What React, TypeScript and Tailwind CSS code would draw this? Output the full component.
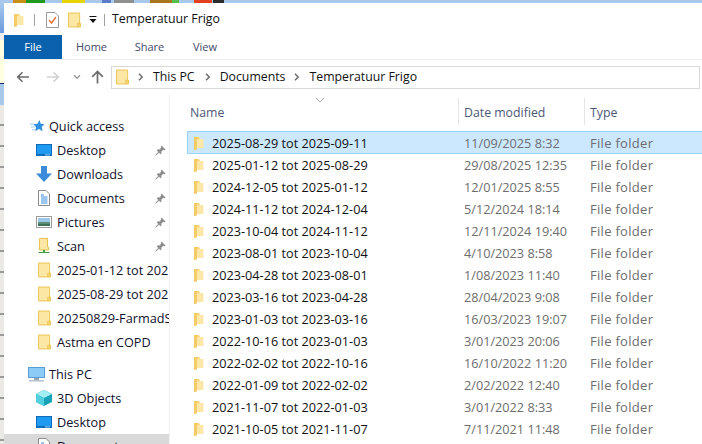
import React from "react";

const FONT = "font-['Open_Sans','Noto_Sans',sans-serif]";

function Folder({ w = 13, h = 16 }: { w?: number; h?: number }) {
  return (
    <svg width={w} height={h} viewBox="0 0 14 16" className="shrink-0">
      <path d="M0.5 0.5H12.5V11.5L10.5 15.5H0.5Z" fill="#FCE8A4" stroke="#EBC24F" />
      <path d="M10.5 15.5V11.5H13.5V15.5Z" fill="#F6D672" stroke="#EBC24F" />
    </svg>
  );
}

function SmallFolder() {
  return (
    <svg width="10" height="14" viewBox="0 0 10 14" className="shrink-0">
      <path d="M0 1H5L6 3H9V12H3L0 14Z" fill="#FBD46E" />
      <path d="M3 3H9.5V12H3Z" fill="#FDE7A8" />
      <path d="M0 1H3V13.5L0 14Z" fill="#F3CB68" />
    </svg>
  );
}

function Pin() {
  return (
    <svg width="11" height="11" viewBox="0 0 12 12" className="shrink-0">
      <path d="M7 0.5L11.5 5L10.3 5.6L9 5.2L6.9 7.4L7 9.4L6 10L2 6L2.7 5L4.7 5L6.8 3L6.4 1.7Z" fill="#8C8C8C" />
      <path d="M3.5 8L0.8 11.2L4 8.5Z" fill="#8C8C8C" stroke="#8C8C8C" strokeWidth="0.7" />
    </svg>
  );
}

function Desktop() {
  return (
    <svg width="16" height="12" viewBox="0 0 16 12" className="shrink-0">
      <rect x="0" y="0" width="16" height="12" fill="#0F6CBD" />
      <rect x="1" y="1" width="14" height="9" fill="#1E9BF0" />
      <rect x="9" y="10.5" width="5" height="0.8" fill="#BFE3FA" />
    </svg>
  );
}

const quick = [
  { label: "Desktop", icon: <Desktop />, pin: true },
  {
    label: "Downloads",
    pin: true,
    icon: (
      <svg width="16" height="16" viewBox="0 0 16 16" className="shrink-0">
        <path d="M5 0H11V7.5H16L8 16L0 7.5H5Z" fill="#3B8BDB" />
      </svg>
    ),
  },
  {
    label: "Documents",
    pin: true,
    icon: (
      <svg width="16" height="16" viewBox="0 0 16 16" className="shrink-0">
        <path d="M2.5 0.5H10L13.5 4V15.5H2.5Z" fill="#fff" stroke="#8A8A8A" />
        <path d="M5 5H8M5 7H11.5M5 9H11.5M5 11H11.5M5 13H11.5" stroke="#3B8BDB" />
      </svg>
    ),
  },
  {
    label: "Pictures",
    pin: true,
    icon: (
      <svg width="16" height="12" viewBox="0 0 16 12" className="shrink-0">
        <rect x="0.5" y="0.5" width="15" height="11" fill="#fff" stroke="#9A9A9A" />
        <rect x="2" y="2" width="12" height="4" fill="#9CC7E8" />
        <rect x="2" y="6" width="12" height="2" fill="#5F8F7A" />
        <rect x="2" y="8" width="12" height="2" fill="#3F6F55" />
      </svg>
    ),
  },
  {
    label: "Scan",
    pin: true,
    icon: (
      <svg width="16" height="16" viewBox="0 0 16 16" className="shrink-0">
        <path d="M3.5 0.5H11.5V9H12.5V12H3.5Z" fill="#FCE8A4" stroke="#EBC24F" />
        <path d="M7 12V14H2.5V15H13.5V14H9V12Z" fill="#3DA03D" />
      </svg>
    ),
  },
  { label: "2025-01-12 tot 202", icon: <Folder />, pin: false },
  { label: "2025-08-29 tot 202", icon: <Folder />, pin: false },
  { label: "20250829-FarmadS", icon: <Folder />, pin: false },
  { label: "Astma en COPD", icon: <Folder />, pin: false },
];

const rows = [
  ["2025-08-29 tot 2025-09-11", "11/09/2025 8:32"],
  ["2025-01-12 tot 2025-08-29", "29/08/2025 12:35"],
  ["2024-12-05 tot 2025-01-12", "12/01/2025 8:55"],
  ["2024-11-12 tot 2024-12-04", "5/12/2024 18:14"],
  ["2023-10-04 tot 2024-11-12", "12/11/2024 19:40"],
  ["2023-08-01 tot 2023-10-04", "4/10/2023 8:58"],
  ["2023-04-28 tot 2023-08-01", "1/08/2023 11:40"],
  ["2023-03-16 tot 2023-04-28", "28/04/2023 9:08"],
  ["2023-01-03 tot 2023-03-16", "16/03/2023 19:07"],
  ["2022-10-16 tot 2023-01-03", "3/01/2023 20:06"],
  ["2022-02-02 tot 2022-10-16", "16/10/2022 11:20"],
  ["2022-01-09 tot 2022-02-02", "2/02/2022 12:40"],
  ["2021-11-07 tot 2022-01-03", "3/01/2022 8:33"],
  ["2021-10-05 tot 2021-11-07", "7/11/2021 11:48"],
];

const ticks = Array.from({ length: 16 }, (_, i) => i);

function Chevron() {
  return (
    <svg width="6" height="8" viewBox="0 0 6 8" className="shrink-0">
      <path d="M1 0.8L4.2 4L1 7.2" fill="none" stroke="#6E6E6E" strokeWidth="1.5" />
    </svg>
  );
}

export default function App() {
  return (
    <div className={`${FONT} w-[702px] h-[444px] overflow-hidden bg-[#ece9e4] text-[12.7px] flex flex-col`}>
      <div className="h-[3px] shrink-0 flex bg-[#a9c8ee]">
        <div className="ml-[13px] w-[13px] bg-[#c98f12]" />
        <div className="w-[19px] bg-[#1f9a1f]" />
        <div className="ml-[17px] w-[23px] bg-[#e5d400]" />
        <div className="ml-[17px] w-[9px] bg-[#5b7cc9]" />
        <div className="ml-[3px] w-[20px] bg-[#8f8f8f]" />
        <div className="ml-[16px] w-[22px] bg-[#a8741e]" />
        <div className="w-[7px] bg-[#55c04a]" />
        <div className="ml-[15px] w-[18px] bg-[#e2401f]" />
        <div className="ml-[1px] w-[11px] bg-[#2b2b2b]" />
      </div>
      <div className="flex-1 min-h-0 flex">
        <div className="w-[4px] shrink-0 flex flex-col overflow-hidden">
          <div className="h-[30px] shrink-0 bg-gradient-to-b from-[#a9c8ee] to-[#6b9bdc]" />
          <div className="h-[7px] shrink-0 bg-[#efefef]" />
          <div className="h-[43px] shrink-0 bg-[#ffffe0]" />
          <div className="h-px shrink-0 bg-[#1a2a6c]" />
          <div className="h-[21px] shrink-0 bg-[#a9c8ee]" />
          {ticks.map((t) => (
            <div key={t} className="h-[21px] shrink-0 pt-[19px] bg-[#ece9e4]">
              <div className="h-[2px] bg-[#9a9a9a]" />
            </div>
          ))}
        </div>
        <div className="flex-1 min-w-0 bg-white flex flex-col">
          <div className="h-[32px] shrink-0 flex items-center pl-[10px] pt-[1px]">
            <SmallFolder />
            <div className="ml-[10px] w-px h-[12px] bg-[#a0a0a0]" />
            <svg width="13" height="16" viewBox="0 0 13 16" className="ml-[11px] shrink-0">
              <path d="M0.5 0.5H9L12.5 4V15.5H0.5Z" fill="#fff" stroke="#9a9a9a" />
              <path d="M3 8L5.5 11L10 5" fill="none" stroke="#E2703A" strokeWidth="1.4" />
            </svg>
            <div className="ml-[9px]"><Folder /></div>
            <svg width="8" height="8" viewBox="0 0 8 8" className="ml-[8px] shrink-0">
              <rect x="0.5" y="0" width="7" height="1" fill="#111" />
              <path d="M0.5 3H7.5L4 7Z" fill="#111" />
            </svg>
            <div className="ml-[7px] w-px h-[12px] bg-[#a0a0a0]" />
            <span className="ml-[7px] text-[#111] text-[12.35px]">Temperatuur Frigo</span>
          </div>
          <div className="h-[24px] shrink-0 flex text-[11px] text-[#444a6a]">
            <div className="w-[58px] bg-[#0a62ae] text-white flex items-center justify-center">File</div>
            <div className="w-[59px] flex items-center justify-center">Home</div>
            <div className="w-[57px] flex items-center justify-center">Share</div>
            <div className="w-[54px] flex items-center justify-center">View</div>
          </div>
          <div className="h-[35px] shrink-0 flex items-center pl-[12px] pr-[2px] border-t border-[#eee]">
            <svg width="14" height="12" viewBox="0 0 14 12" className="shrink-0">
              <path d="M13 6H2M6.5 1.2L1.7 6L6.5 10.8" fill="none" stroke="#6b6b6b" strokeWidth="1.6" />
            </svg>
            <svg width="14" height="12" viewBox="0 0 14 12" className="ml-[16px] shrink-0">
              <path d="M1 6H12M7.5 1.2L12.3 6L7.5 10.8" fill="none" stroke="#d2d2d2" strokeWidth="1.6" />
            </svg>
            <svg width="8" height="6" viewBox="0 0 8 6" className="ml-[13px] shrink-0">
              <path d="M1 1.2L4 4.2L7 1.2" fill="none" stroke="#9a9a9a" strokeWidth="1.4" />
            </svg>
            <svg width="13" height="14" viewBox="0 0 13 14" className="ml-[10px] shrink-0">
              <path d="M6.5 13.5V2M1.2 6.8L6.5 1.5L11.8 6.8" fill="none" stroke="#6b6b6b" strokeWidth="1.7" />
            </svg>
            <div className="ml-[7px] flex-1 h-[23px] border border-[#d9d9d9] flex items-center pl-[4px] text-[#111] text-[12.3px] overflow-hidden">
              <Folder w={13} h={16} />
              <div className="ml-[9px]"><Chevron /></div>
              <span className="ml-[9px]">This PC</span>
              <div className="ml-[10px]"><Chevron /></div>
              <span className="ml-[9px]">Documents</span>
              <div className="ml-[9px]"><Chevron /></div>
              <span className="ml-[9px]">Temperatuur Frigo</span>
            </div>
          </div>

          <div className="flex-1 min-h-0 flex">
            <nav className="w-[165px] shrink-0 text-[#11112a] pt-[20px] overflow-hidden">
              <div className="h-[24px] flex items-center pl-[26px]">
                <svg width="15" height="14" viewBox="0 0 16 14" className="shrink-0">
                  <path d="M10 0.5L11.5 4.5L15.5 5L12.5 7.8L13.4 12.5L9.5 10.2L5.6 12.5L6.5 8L3.5 5.2L8 4.5Z" fill="#2F8FE3" />
                  <path d="M0 5H4M1 8H5M2 11H5" stroke="#8CC4F0" strokeWidth="1" />
                </svg>
                <span className="ml-[4px] pt-[2px]">Quick access</span>
              </div>
              {quick.map((q) => (
                <div key={q.label} className="h-[24px] flex items-center pl-[30px] whitespace-nowrap">
                  <div className="w-[20px] shrink-0 flex justify-center">{q.icon}</div>
                  <span className="ml-[3px] pt-[2px] flex-1 overflow-hidden">{q.label}</span>
                  {q.pin && <div className="mr-[3px]"><Pin /></div>}
                </div>
              ))}
              <div className="h-[8px]" />
              <div className="h-[24px] flex items-center pl-[24px]">
                <svg width="17" height="15" viewBox="0 0 17 15" className="shrink-0">
                  <rect x="0.5" y="0.5" width="16" height="10" fill="#8CCBF5" stroke="#5A9BD0" />
                  <rect x="6" y="11" width="5" height="2" fill="#9AA6B2" />
                  <rect x="1" y="13" width="15" height="1.5" fill="#B8C2CC" />
                </svg>
                <span className="ml-[4px] pt-[2px]">This PC</span>
              </div>
              <div className="h-[24px] flex items-center pl-[30px]">
                <div className="w-[20px] flex justify-center">
                  <svg width="16" height="16" viewBox="0 0 16 16">
                    <path d="M8 0L16 4V12L8 16L0 12V4Z" fill="#17A2B8" />
                    <path d="M8 0L16 4L8 8L0 4Z" fill="#A4EDF2" />
                    <path d="M0 4L8 8V16L0 12Z" fill="#4FD0DC" />
                  </svg>
                </div>
                <span className="ml-[3px] pt-[2px]">3D Objects</span>
              </div>
              <div className="h-[24px] flex items-center pl-[30px]">
                <div className="w-[20px] flex justify-center"><Desktop /></div>
                <span className="ml-[3px] pt-[2px]">Desktop</span>
              </div>
              <div className="h-[24px] bg-[#d9d9d9] flex items-center pl-[30px]">
                <div className="w-[20px] flex justify-center">
                  <svg width="16" height="16" viewBox="0 0 16 16">
                    <path d="M2.5 0.5H10L13.5 4V15.5H2.5Z" fill="#fff" stroke="#8A8A8A" />
                    <path d="M5 5H8M5 7H11.5M5 9H11.5" stroke="#3B8BDB" />
                  </svg>
                </div>
                <span className="ml-[3px] pt-[2px]">Documents</span>
              </div>
            </nav>

            <main className="flex-1 min-w-0 relative border-l border-[#f0f0f0]">
              <svg width="10" height="6" viewBox="0 0 10 6" className="absolute left-[145px] top-[3px]">
                <path d="M1 1L5 5L9 1" fill="none" stroke="#a8a8a8" />
              </svg>
              <div className="h-[27px] mt-[4px] flex items-stretch text-[#4c5878] text-[12.3px]">
                <div className="ml-[20px] w-[268px] pt-[4px] flex items-center">Name</div>
                <div className="w-[126px] border-l border-[#e5e5e5] pl-[5px] pt-[4px] flex items-center">Date modified</div>
                <div className="flex-1 border-l border-[#e5e5e5] pl-[5px] pt-[4px] flex items-center">Type</div>
              </div>
              <div className="mt-[7px]">
                {rows.map(([n, d], i) => (
                  <div
                    key={n}
                    className={`flex items-center ml-[17px] whitespace-nowrap border-l ${
                      i === 0
                        ? "h-[23px] -mt-[1px] bg-[#cce8ff] border-y border-[#99d1ff]"
                        : "h-[22px] border-transparent"
                    }`}
                  >
                    <div className="w-[24px] pl-[6px] flex shrink-0"><SmallFolder /></div>
                    <span className="w-[252px] pt-[2px] shrink-0 text-[#111]">{n}</span>
                    <span className="w-[126px] pt-[2px] shrink-0 text-[#6d6d6d]">{d}</span>
                    <span className="pt-[2px] text-[#6d6d6d] text-[13px] tracking-[0.3px]">File folder</span>
                  </div>
                ))}
              </div>
            </main>
          </div>
        </div>
      </div>
    </div>
  );
}
